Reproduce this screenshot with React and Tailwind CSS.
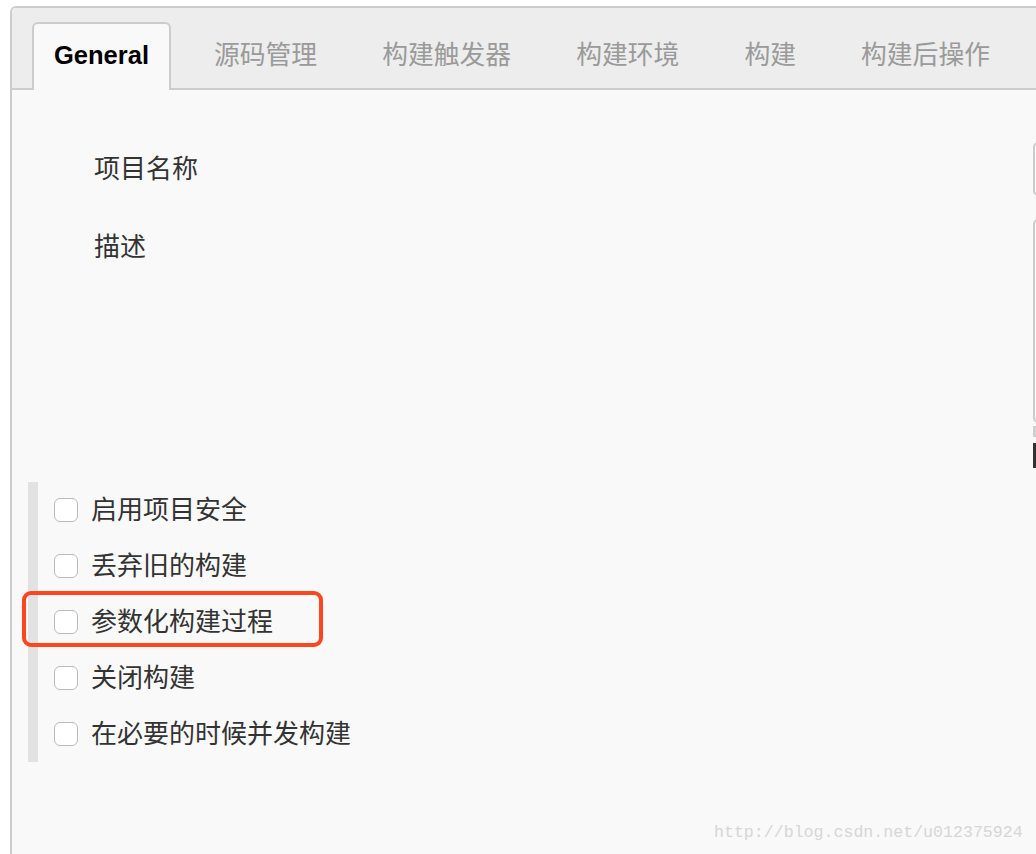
// Jenkins job config: General tab with checkbox options
const tabs = ['源码管理', '构建触发器', '构建环境', '构建', '构建后操作'];

const options = ['启用项目安全', '丢弃旧的构建', '参数化构建过程', '关闭构建', '在必要的时候并发构建'];

const font = { fontFamily: '"Liberation Sans", "Noto Sans CJK SC", sans-serif' };

const App = () => {
  return (
    <div className="relative w-[1036px] h-[854px] overflow-hidden bg-white" style={font}>
      <div className="ml-[10px] mt-[6px] w-[1100px] h-[900px] border-l-2 border-t-2 border-[#cccccc] rounded-tl-[6px] overflow-hidden bg-[#f9f9f9]">
        {/* Tab bar */}
        <div className="h-[82px] bg-[#ededed] border-b-2 border-[#cccccc] flex items-end pl-[20px] gap-[21px]">
          <div className="h-[68px] -mb-[2px] px-[20px] pb-[3px] border-2 border-b-0 border-[#cccccc] rounded-t-[6px] bg-[#f9f9f9] flex items-center text-[25.5px] font-bold text-black">
            General
          </div>
          {tabs.map(t => (
            <div key={t} className="h-[66px] px-[22px] flex items-center text-[25.8px] text-[#9a9a9a]">
              {t}
            </div>
          ))}
        </div>

        {/* Fields */}
        <div className="pt-[52px] flex">
          <div className="w-[1021px] shrink-0 pl-[82px] text-[26px] text-[#333333]">
            <div className="h-[54px] flex items-center">项目名称</div>
            <div className="mt-[23px] pt-[9px]">描述</div>
          </div>
          <div className="w-[300px] shrink-0">
            <div className="h-[54px] border-2 border-[#cccccc] rounded-[5px] bg-[#f9f9f9]"></div>
            <div className="mt-[23px] h-[204px] border-2 border-[#cccccc] rounded-[5px] bg-[#f9f9f9]"></div>
            <div className="mt-[3px] h-[11px] w-[3px] bg-[#cfcfcf]"></div>
            <div className="mt-[6px] h-[25px] w-[3px] bg-[#333333]"></div>
          </div>
        </div>

        {/* Options */}
        <div className="relative mt-[14px] ml-[16px] border-l-[10px] border-[#e2e2e2]">
          {options.map(o => (
            <div key={o} className="h-[56px] flex items-center pl-[16px] gap-[13px]">
              <span className="w-[24px] h-[24px] rounded-[6px] border-[1.5px] border-[#bababa] bg-white"></span>
              <span className="text-[26px] text-[#333333]">{o}</span>
            </div>
          ))}
          <div className="absolute left-[-16px] top-[109px] w-[301px] h-[56px] border-[4px] border-[#ff4420] rounded-[9px]"></div>
        </div>
      </div>

      <div
        className="absolute left-[714px] top-[821px] text-[16.6px] text-[#d6d6d6]"
        style={{ fontFamily: '"Liberation Mono", monospace' }}
      >
        http://blog.csdn.net/u012375924
      </div>
    </div>
  );
};

export default App;
